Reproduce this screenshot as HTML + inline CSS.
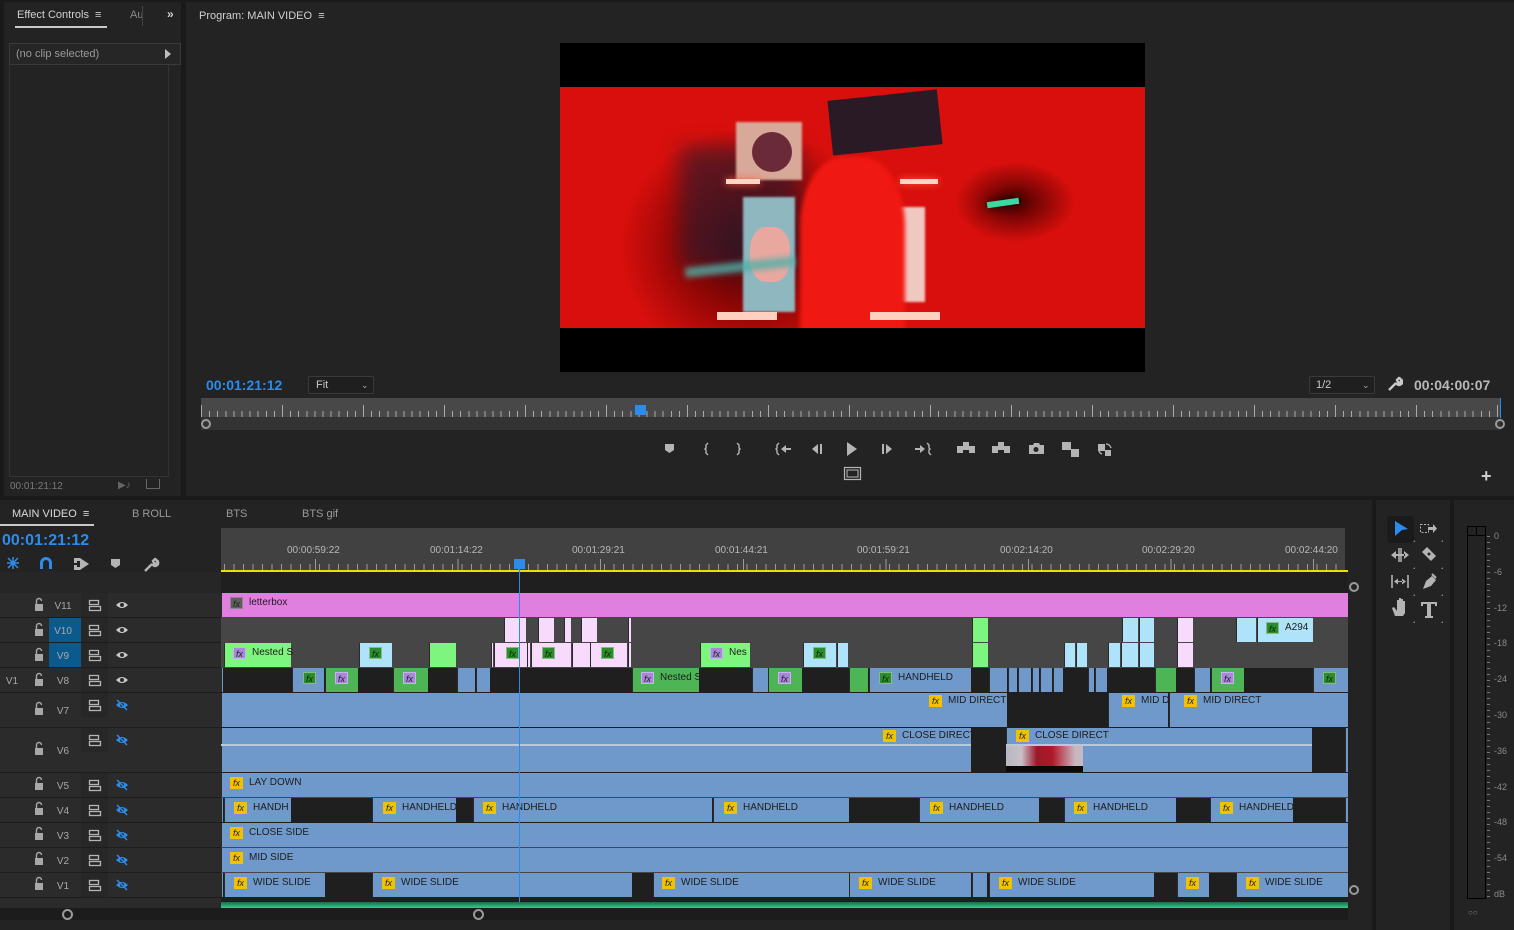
<!DOCTYPE html>
<html><head><meta charset="utf-8">
<style>
*{margin:0;padding:0;box-sizing:border-box}
body{width:1514px;height:930px;background:#1a1a1a;position:relative;overflow:hidden;font-family:"Liberation Sans",sans-serif;color:#b4b4b4}
.a{position:absolute}
.pan{position:absolute;background:#232323}
.t11{font-size:11px}
.row{position:absolute;left:221px;width:1127px;background:#464646}
.k{position:absolute;top:0;bottom:1px;box-shadow:inset 1px 0 0 #2a2a2a}
.B{background:#6f99cb}.K{background:#1f1f1f}.P{background:#f8dafc}.L{background:#aee3fa}.G{background:#7ef57e}.D{background:#4db556}.M{background:#e07fe0}
.lab{position:absolute;top:3px;height:14px;font-size:10px;color:#1c1c1c;white-space:nowrap;line-height:14px}
.fx{display:inline-block;width:13px;height:12px;font-size:9px;font-style:italic;line-height:12px;text-align:center;margin-right:6px;color:#222;vertical-align:top;margin-top:1px}
.y{background:#f2c200}.g{background:#2a8f2a;border:1px solid #8ab88a;color:#102010}.p{background:#a887dc;border:1px solid #c7b4ee}.gr{background:#5e5e5e;border:1px solid #888}
.hr{position:absolute;left:0;width:221px;background:#2b2b2b;border-bottom:1px solid #1d1d1d}
.hr .tg{position:absolute;left:81px;width:27px;top:0;bottom:0;background:#272727}
.rl{position:absolute;top:545px;font-size:10px;color:#b8b8b8}
.ic{position:absolute}
</style></head><body>

<!-- LEFT EFFECT CONTROLS -->
<div class="pan" style="left:4px;top:2px;width:177px;height:494px"></div>
<div class="a t11" style="left:17px;top:9px;color:#d0d0d0">Effect Controls &nbsp;≡</div>
<div class="a" style="left:15px;top:26px;width:92px;height:2px;background:#c8c8c8"></div>
<div class="a t11" style="left:130px;top:9px;color:#8a8a8a">Au</div>
<div class="a" style="left:142px;top:6px;width:1px;height:20px;background:#444"></div>
<div class="a" style="left:167px;top:7px;font-size:12px;color:#cfcfcf;font-weight:bold">»</div>
<div class="a" style="left:9px;top:43px;width:172px;height:22px;border:1px solid #3a3a3a;background:#262626"></div>
<div class="a t11" style="left:16px;top:48px;color:#9a9a9a">(no clip selected)</div>
<div class="a" style="left:165px;top:49px;width:0;height:0;border-left:6px solid #bdbdbd;border-top:5px solid transparent;border-bottom:5px solid transparent"></div>
<div class="a" style="left:9px;top:65px;width:160px;height:412px;border:1px solid #333;border-top:none;background:#232323"></div>
<div class="a" style="left:10px;top:481px;font-size:10px;color:#7a7a7a">00:01:21:12</div>
<div class="a" style="left:118px;top:480px;font-size:10px;color:#666">▶♪</div>
<div class="a" style="left:146px;top:479px;width:14px;height:10px;border:1px solid #666;border-top:none"></div>

<!-- PROGRAM MONITOR -->
<div class="pan" style="left:186px;top:2px;width:1328px;height:494px"></div>
<div class="a t11" style="left:199px;top:10px;color:#d0d0d0">Program: MAIN VIDEO &nbsp;≡</div>
<div class="a" style="left:560px;top:43px;width:585px;height:329px;background:#000"></div>
<div class="a" style="left:560px;top:87px;width:585px;height:241px;overflow:hidden;background:radial-gradient(ellipse 130px 120px at 190px 160px,#3a0810 0%,rgba(90,0,0,.6) 50%,rgba(0,0,0,0) 100%),radial-gradient(ellipse 60px 40px at 455px 115px,#400 0%,rgba(0,0,0,0) 100%),#d80f0c">
  <div class="a" style="left:120px;top:60px;width:120px;height:120px;background:#2b1c2e;filter:blur(10px);opacity:.6"></div>
  <div class="a" style="left:176px;top:35px;width:66px;height:58px;background:#d8a898;filter:blur(1px)"></div>
  <div class="a" style="left:192px;top:45px;width:40px;height:40px;background:#6a2a3a;border-radius:50%"></div>
  <div class="a" style="left:183px;top:110px;width:52px;height:115px;background:#8fb7c0;filter:blur(1px)"></div>
  <div class="a" style="left:190px;top:140px;width:40px;height:55px;background:#e8a8a0;border-radius:40%"></div>
  <div class="a" style="left:270px;top:8px;width:110px;height:55px;background:#2a1a26;transform:rotate(-6deg)"></div>
  <div class="a" style="left:320px;top:120px;width:45px;height:95px;background:#f0c8c2;filter:blur(1px)"></div>
  <div class="a" style="left:240px;top:70px;width:105px;height:175px;background:#f01812;border-radius:40% 40% 0 0;filter:blur(2px)"></div>
  <div class="a" style="left:166px;top:92px;width:34px;height:5px;background:#ffd5c5;box-shadow:0 0 8px #ff6040"></div>
  <div class="a" style="left:340px;top:92px;width:38px;height:5px;background:#ffd5c5;box-shadow:0 0 8px #ff6040"></div>
  <div class="a" style="left:157px;top:225px;width:60px;height:8px;background:#ffd0c0"></div>
  <div class="a" style="left:310px;top:225px;width:70px;height:8px;background:#ffd0c0"></div>
  <div class="a" style="left:125px;top:175px;width:110px;height:10px;background:#4fb0a8;filter:blur(3px);transform:rotate(-6deg);opacity:.8"></div>
  <div class="a" style="left:427px;top:113px;width:32px;height:6px;background:#3bd9a0;transform:rotate(-8deg);box-shadow:0 0 10px #000"></div>
</div>
<div class="a" style="left:206px;top:377px;font-size:14px;font-weight:bold;color:#2d8ceb">00:01:21:12</div>
<div class="a" style="left:308px;top:376px;width:66px;height:18px;border:1px solid #3a3a3a;border-radius:2px;background:#1f1f1f"></div>
<div class="a t11" style="left:316px;top:379px;color:#c8c8c8">Fit</div>
<div class="a" style="left:361px;top:380px;font-size:9px;color:#aaa">⌄</div>
<div class="a" style="left:1309px;top:376px;width:66px;height:18px;border:1px solid #3a3a3a;border-radius:2px;background:#1f1f1f"></div>
<div class="a t11" style="left:1316px;top:379px;color:#c8c8c8">1/2</div>
<div class="a" style="left:1362px;top:380px;font-size:9px;color:#aaa">⌄</div>
<svg class="ic" style="left:1387px;top:376px" width="16" height="16" viewBox="0 0 16 16"><path d="M2 14l7-7M9 7a3 3 0 1 0 3-5l-2 2 1 2 2 1 2-2a3 3 0 0 1-5 3" stroke="#c8c8c8" stroke-width="2.4" fill="none"/></svg>
<div class="a" style="left:1414px;top:377px;font-size:14px;font-weight:bold;color:#b8b8b8">00:04:00:07</div>
<div class="a" style="left:201px;top:398px;width:1300px;height:20px;background:#484848"></div>
<div class="a" style="left:201px;top:411px;width:1300px;height:6px;background:repeating-linear-gradient(90deg,#aaa 0 1px,transparent 1px 8.1px)"></div>
<div class="a" style="left:201px;top:405px;width:1300px;height:12px;background:repeating-linear-gradient(90deg,#aaa 0 1px,transparent 1px 81px)"></div>
<div class="a" style="left:201px;top:417px;width:1300px;height:13px;background:#333"></div>
<div class="a" style="left:635px;top:405px;width:11px;height:10px;background:#2d8ceb"></div>
<div class="a" style="left:1500px;top:398px;width:1px;height:20px;background:#2d8ceb"></div>
<div class="a" style="left:201px;top:419px;width:10px;height:10px;border:2px solid #9a9a9a;border-radius:50%"></div>
<div class="a" style="left:1495px;top:419px;width:10px;height:10px;border:2px solid #9a9a9a;border-radius:50%"></div>
<!-- transport -->
<svg class="ic" style="left:660px;top:440px" width="460" height="44" viewBox="0 0 460 44" fill="#b4b4b4" stroke="#b4b4b4">
 <path d="M5 4h9v6l-4.5 3L5 10z" stroke="none"/>
 <path d="M48 3l-2 2v3l-1 1 1 1v3l2 2" fill="none" stroke-width="1.4"/>
 <path d="M77 3l2 2v3l1 1-1 1v3l-2 2" fill="none" stroke-width="1.4"/>
 <path d="M119 3l-2 2v3l-1 1 1 1v3l2 2" fill="none" stroke-width="1.4"/><path d="M121 9l5-4v3h5v2h-5v3z" stroke="none"/>
 <path d="M152 9l6-5v10z M160 4h2v10h-2z" stroke="none"/>
 <path d="M187 2l10 7-10 7z" stroke="none"/>
 <path d="M222 4h2v10h-2z M226 4l6 5-6 5z" stroke="none"/>
 <path d="M255 8h5V5l5 4-5 4v-3h-5z" stroke="none"/><path d="M267 3l2 2v3l1 1-1 1v3l2 2" fill="none" stroke-width="1.4"/>
 <path d="M297 6h6v-4h6v4h6v7h-6v-3h-6v3h-6z" stroke="none"/>
 <path d="M332 6h6v-4h6v4h6v7h-6v-3h-6v3h-6z" stroke="none"/>
 <path d="M369 5h4l1-2h5l1 2h4v9h-15z" stroke="none"/><circle cx="376" cy="9.5" r="2.5" fill="#232323" stroke="none"/>
 <path d="M402 2h9v8h-9z M411 9h8v8h-8z" stroke="none"/>
 <path d="M438 4h7v7h-7z M445 10h6v6h-6z" stroke="none"/><path d="M446 4a5 5 0 0 1 5 4M442 14a5 5 0 0 1-3-3" fill="none" stroke-width="1.3"/>
 <rect x="184.5" y="27.5" width="16" height="12" fill="none" stroke-width="1.2"/><rect x="187" y="30" width="11" height="7" fill="none" stroke-width="1"/>
</svg>
<div class="a" style="left:1481px;top:466px;font-size:18px;font-weight:bold;color:#cfcfcf">+</div>

<!-- TIMELINE PANEL -->
<div class="pan" style="left:0;top:500px;width:1372px;height:430px"></div>
<div class="a t11" style="left:12px;top:508px;color:#dcdcdc">MAIN VIDEO &nbsp;≡</div>
<div class="a" style="left:0;top:524px;width:94px;height:2px;background:#c8c8c8"></div>
<div class="a t11" style="left:132px;top:508px;color:#9a9a9a">B ROLL</div>
<div class="a t11" style="left:226px;top:508px;color:#9a9a9a">BTS</div>
<div class="a t11" style="left:302px;top:508px;color:#9a9a9a">BTS gif</div>
<div class="a" style="left:2px;top:532px;font-size:16px;font-weight:bold;color:#2d8ceb">00:01:21:12</div>
<svg class="ic" style="left:4px;top:555px" width="160" height="18" viewBox="0 0 160 18">
 <g stroke="#2d8ceb" stroke-width="1.5" fill="none"><path d="M9 2v12M3 8h12M4 3l10 10M14 3L4 13"/></g>
 <path d="M36 14V8a6 6 0 0 1 12 0v6h-3V8a3 3 0 0 0-6 0v6z" fill="#2d8ceb"/>
 <path d="M70 3h6v3h-3v2h-3zM70 10h3v2h3v3h-6zM76 3l9 6-9 6z" fill="#b4b4b4"/>
 <path d="M107 4h9v6l-4.5 3-4.5-3z" fill="#b4b4b4"/>
 <path d="M141 16l7-7M148 9a3 3 0 1 0 3-5l-2 2 1 2 2 1 2-2a3 3 0 0 1-5 3" stroke="#b4b4b4" stroke-width="2.4" fill="none"/>
</svg>

<!-- ruler -->
<div class="a" style="left:221px;top:528px;width:1124px;height:43px;background:#414141"></div>
<div class="a" style="left:224px;top:564px;width:1121px;height:6px;background:repeating-linear-gradient(90deg,#9a9a9a 0 1px,transparent 1px 9.5px)"></div>
<div class="a" style="left:315px;top:559px;width:1030px;height:11px;background:repeating-linear-gradient(90deg,#9a9a9a 0 1px,transparent 1px 142.6px)"></div>
<div class="a" style="left:221px;top:570px;width:1127px;height:2px;background:#e8e000"></div>
<div class="a" style="left:221px;top:572px;width:1127px;height:21px;background:#1f1f1f"></div>
<div class="rl" style="left:287px">00:00:59:22</div>
<div class="rl" style="left:430px">00:01:14:22</div>
<div class="rl" style="left:572px">00:01:29:21</div>
<div class="rl" style="left:715px">00:01:44:21</div>
<div class="rl" style="left:857px">00:01:59:21</div>
<div class="rl" style="left:1000px">00:02:14:20</div>
<div class="rl" style="left:1142px">00:02:29:20</div>
<div class="rl" style="left:1285px">00:02:44:20</div>

<!-- track headers -->
<div class="a" style="left:0;top:572px;width:221px;height:21px;background:#262626"></div>
<div class="hr" style="top:593px;height:25px"><div class="tg"></div></div>
<div class="hr" style="top:618px;height:25px"><div class="tg"></div><div class="a" style="left:49px;top:0;width:32px;height:24px;background:#0b5a8d"></div></div>
<div class="hr" style="top:643px;height:25px"><div class="tg"></div><div class="a" style="left:49px;top:0;width:32px;height:24px;background:#0b5a8d"></div></div>
<div class="hr" style="top:668px;height:25px"><div class="tg"></div></div>
<div class="hr" style="top:693px;height:35px"><div class="tg" style="bottom:10px"></div></div>
<div class="hr" style="top:728px;height:45px"><div class="tg" style="bottom:20px"></div></div>
<div class="hr" style="top:773px;height:25px"><div class="tg"></div></div>
<div class="hr" style="top:798px;height:25px"><div class="tg"></div></div>
<div class="hr" style="top:823px;height:25px"><div class="tg"></div></div>
<div class="hr" style="top:848px;height:25px"><div class="tg"></div></div>
<div class="hr" style="top:873px;height:25px"><div class="tg"></div></div>
<div class="a" style="left:0;top:898px;width:221px;height:10px;background:#2b2b2b"></div>

<svg class="ic" style="left:0;top:593px" width="221" height="305" viewBox="0 0 221 305">
 <defs>
  <g id="lk"><path d="M-3 2h8v7h-8z" fill="#a8a8a8"/><path d="M-1.5 2v-3a2.5 2.5 0 0 1 5 0" stroke="#a8a8a8" stroke-width="1.4" fill="none"/></g>
  <g id="tg" fill="none" stroke="#b4b4b4" stroke-width="1.3"><rect x="-5.5" y="-4.5" width="9" height="4"/><rect x="-5.5" y="1.5" width="11" height="4"/></g>
  <g id="ey"><path d="M-6 0q6-6 12 0q-6 6-12 0z" fill="#c8c8c8"/><circle r="2" fill="#2b2b2b"/></g>
  <g id="ex"><path d="M-6 0q6-6 12 0q-6 6-12 0z" fill="#2d8ceb"/><circle r="2" fill="#2b2b2b"/><path d="M-5-5l10 10" stroke="#2d8ceb" stroke-width="1.5"/></g>
 </defs>
 <g font-family="Liberation Sans" font-size="10" fill="#a8a8a8" text-anchor="middle">
  <use href="#lk" x="38" y="9"/><text x="63" y="16">V11</text><use href="#tg" x="95" y="12"/><use href="#ey" x="122" y="12"/>
  <use href="#lk" x="38" y="34"/><text x="63" y="41">V10</text><use href="#tg" x="95" y="37"/><use href="#ey" x="122" y="37"/>
  <use href="#lk" x="38" y="59"/><text x="63" y="66">V9</text><use href="#tg" x="95" y="62"/><use href="#ey" x="122" y="62"/>
  <text x="12" y="91">V1</text><use href="#lk" x="38" y="84"/><text x="63" y="91">V8</text><use href="#tg" x="95" y="87"/><use href="#ey" x="122" y="87"/>
  <use href="#lk" x="38" y="113"/><text x="63" y="121">V7</text><use href="#tg" x="95" y="112"/><use href="#ex" x="122" y="112"/>
  <use href="#lk" x="38" y="153"/><text x="63" y="161">V6</text><use href="#tg" x="95" y="147"/><use href="#ex" x="122" y="147"/>
  <use href="#lk" x="38" y="188"/><text x="63" y="196">V5</text><use href="#tg" x="95" y="192"/><use href="#ex" x="122" y="192"/>
  <use href="#lk" x="38" y="213"/><text x="63" y="221">V4</text><use href="#tg" x="95" y="217"/><use href="#ex" x="122" y="217"/>
  <use href="#lk" x="38" y="238"/><text x="63" y="246">V3</text><use href="#tg" x="95" y="242"/><use href="#ex" x="122" y="242"/>
  <use href="#lk" x="38" y="263"/><text x="63" y="271">V2</text><use href="#tg" x="95" y="267"/><use href="#ex" x="122" y="267"/>
  <use href="#lk" x="38" y="288"/><text x="63" y="296">V1</text><use href="#tg" x="95" y="292"/><use href="#ex" x="122" y="292"/>
 </g>
</svg>

<!-- V11 -->
<div class="row" style="top:593px;height:25px"><div class="k M" style="left:0;width:1127px"></div><div class="lab" style="left:9px"><i class="fx gr">fx</i>letterbox</div></div>
<!-- V10 -->
<div class="row" style="top:618px;height:25px">
 <div class="k P" style="left:283px;width:22px"></div><div class="k P" style="left:317px;width:16px"></div><div class="k P" style="left:343px;width:7px"></div><div class="k P" style="left:360px;width:16px"></div><div class="k P" style="left:407px;width:3px"></div>
 <div class="k G" style="left:751px;width:16px"></div>
 <div class="k L" style="left:901px;width:16px"></div><div class="k L" style="left:918px;width:15px"></div>
 <div class="k P" style="left:956px;width:16px"></div>
 <div class="k L" style="left:1015px;width:20px"></div><div class="k L" style="left:1036px;width:56px"></div>
 <div class="lab" style="left:1045px"><i class="fx g">fx</i>A294</div>
</div>
<!-- V9 -->
<div class="row" style="top:643px;height:25px">
 <div class="k G" style="left:3px;width:67px"></div><div class="lab" style="left:12px"><i class="fx p">fx</i>Nested S</div>
 <div class="k L" style="left:138px;width:33px"></div><div class="lab" style="left:148px"><i class="fx g">fx</i></div>
 <div class="k G" style="left:208px;width:27px"></div>
 <div class="k P" style="left:270px;width:2px"></div><div class="k P" style="left:273px;width:33px"></div><div class="k P" style="left:306px;width:3px"></div><div class="k P" style="left:310px;width:40px"></div><div class="k P" style="left:351px;width:18px"></div><div class="k P" style="left:369px;width:37px"></div><div class="k P" style="left:407px;width:3px"></div>
 <div class="lab" style="left:285px"><i class="fx g">fx</i></div><div class="lab" style="left:321px"><i class="fx g">fx</i></div><div class="lab" style="left:380px"><i class="fx g">fx</i></div>
 <div class="k G" style="left:479px;width:50px"></div><div class="lab" style="left:489px"><i class="fx p">fx</i>Nes</div>
 <div class="k L" style="left:582px;width:33px"></div><div class="k L" style="left:616px;width:11px"></div><div class="lab" style="left:592px"><i class="fx g">fx</i></div>
 <div class="k G" style="left:751px;width:16px"></div>
 <div class="k L" style="left:843px;width:11px"></div><div class="k L" style="left:855px;width:11px"></div>
 <div class="k L" style="left:887px;width:12px"></div><div class="k L" style="left:900px;width:17px"></div><div class="k L" style="left:918px;width:15px"></div>
 <div class="k P" style="left:956px;width:16px"></div>
</div>
<!-- V8 -->
<div class="row" style="top:668px;height:25px;background:#1f1f1f">
 <div class="k B" style="left:0;width:2px"></div>
 <div class="k B" style="left:71px;width:32px"></div><div class="lab" style="left:82px"><i class="fx g">fx</i></div>
 <div class="k D" style="left:104px;width:33px"></div><div class="lab" style="left:114px"><i class="fx p">fx</i></div>
 <div class="k D" style="left:172px;width:35px"></div><div class="lab" style="left:182px"><i class="fx p">fx</i></div>
 <div class="k B" style="left:236px;width:18px"></div><div class="k B" style="left:255px;width:14px"></div>
 <div class="k D" style="left:411px;width:67px"></div><div class="lab" style="left:420px"><i class="fx p">fx</i>Nested S</div>
 <div class="k B" style="left:531px;width:16px"></div>
 <div class="k D" style="left:547px;width:34px"></div><div class="lab" style="left:557px"><i class="fx p">fx</i></div>
 <div class="k D" style="left:628px;width:19px"></div>
 <div class="k B" style="left:648px;width:102px"></div><div class="lab" style="left:658px"><i class="fx g">fx</i>HANDHELD</div>
 <div class="k B" style="left:768px;width:18px"></div><div class="k B" style="left:787px;width:9px"></div><div class="k B" style="left:797px;width:13px"></div><div class="k B" style="left:811px;width:7px"></div><div class="k B" style="left:819px;width:12px"></div><div class="k B" style="left:832px;width:10px"></div>
 <div class="k B" style="left:867px;width:6px"></div><div class="k B" style="left:874px;width:12px"></div>
 <div class="k D" style="left:934px;width:21px"></div>
 <div class="k B" style="left:973px;width:16px"></div>
 <div class="k D" style="left:990px;width:33px"></div><div class="lab" style="left:1000px"><i class="fx p">fx</i></div>
 <div class="k B" style="left:1092px;width:35px"></div><div class="lab" style="left:1102px"><i class="fx g">fx</i></div>
</div>
<!-- V7 -->
<div class="row" style="top:693px;height:35px;background:#1f1f1f">
 <div class="k B" style="left:0;width:786px"></div><div class="lab" style="left:708px;top:1px"><i class="fx y">fx</i>MID DIRECT</div>
 <div class="k B" style="left:887px;width:60px"></div><div class="lab" style="left:901px;top:1px"><i class="fx y">fx</i>MID DI</div>
 <div class="k B" style="left:948px;width:179px"></div><div class="lab" style="left:963px;top:1px"><i class="fx y">fx</i>MID DIRECT</div>
</div>
<!-- V6 -->
<div class="row" style="top:728px;height:45px;background:#1f1f1f">
 <div class="k B" style="left:0;width:750px"></div><div class="lab" style="left:662px;top:1px"><i class="fx y">fx</i>CLOSE DIRECT</div>
 <div class="k B" style="left:785px;width:306px"></div>
 <div class="a" style="left:785px;top:18px;width:77px;height:26px;background:linear-gradient(90deg,#b8b8c0 0%,#c8c0c8 20%,#9a1a2a 40%,#b01828 60%,#c8b8c0 90%)"></div>
 <div class="a" style="left:785px;top:38px;width:77px;height:6px;background:#0a0a0a"></div>
 <div class="lab" style="left:795px;top:1px"><i class="fx y">fx</i>CLOSE DIRECT</div>
 <div class="k B" style="left:1124px;width:3px"></div>
 <div class="a" style="left:0;top:16px;width:750px;height:2px;background:#b9c9dc"></div>
 <div class="a" style="left:785px;top:16px;width:306px;height:2px;background:#b9c9dc"></div>
</div>
<!-- V5 -->
<div class="row" style="top:773px;height:25px"><div class="k B" style="left:0;width:1127px"></div><div class="lab" style="left:9px"><i class="fx y">fx</i>LAY DOWN</div></div>
<!-- V4 -->
<div class="row" style="top:798px;height:25px;background:#1f1f1f">
 <div class="k B" style="left:0;width:2px"></div>
 <div class="k B" style="left:3px;width:67px"></div><div class="lab" style="left:13px"><i class="fx y">fx</i>HANDH</div>
 <div class="k B" style="left:151px;width:84px"></div><div class="lab" style="left:162px"><i class="fx y">fx</i>HANDHELD</div>
 <div class="k B" style="left:252px;width:239px"></div><div class="lab" style="left:262px"><i class="fx y">fx</i>HANDHELD</div>
 <div class="k B" style="left:492px;width:136px"></div><div class="lab" style="left:503px"><i class="fx y">fx</i>HANDHELD</div>
 <div class="k B" style="left:698px;width:120px"></div><div class="lab" style="left:709px"><i class="fx y">fx</i>HANDHELD</div>
 <div class="k B" style="left:843px;width:112px"></div><div class="lab" style="left:853px"><i class="fx y">fx</i>HANDHELD</div>
 <div class="k B" style="left:989px;width:83px"></div><div class="lab" style="left:999px"><i class="fx y">fx</i>HANDHELD</div>
 <div class="k B" style="left:1124px;width:3px"></div>
</div>
<!-- V3 -->
<div class="row" style="top:823px;height:25px"><div class="k B" style="left:0;width:1127px"></div><div class="lab" style="left:9px"><i class="fx y">fx</i>CLOSE SIDE</div></div>
<!-- V2 -->
<div class="row" style="top:848px;height:25px"><div class="k B" style="left:0;width:1127px"></div><div class="lab" style="left:9px"><i class="fx y">fx</i>MID SIDE</div></div>
<!-- V1 -->
<div class="row" style="top:873px;height:25px;background:#1f1f1f">
 <div class="k B" style="left:0;width:2px"></div>
 <div class="k B" style="left:3px;width:101px"></div><div class="lab" style="left:13px"><i class="fx y">fx</i>WIDE SLIDE</div>
 <div class="k B" style="left:151px;width:260px"></div><div class="lab" style="left:161px"><i class="fx y">fx</i>WIDE SLIDE</div>
 <div class="k B" style="left:432px;width:196px"></div><div class="lab" style="left:441px"><i class="fx y">fx</i>WIDE SLIDE</div>
 <div class="k B" style="left:628px;width:122px"></div><div class="lab" style="left:638px"><i class="fx y">fx</i>WIDE SLIDE</div>
 <div class="k B" style="left:751px;width:15px"></div>
 <div class="k B" style="left:768px;width:165px"></div><div class="lab" style="left:778px"><i class="fx y">fx</i>WIDE SLIDE</div>
 <div class="k B" style="left:956px;width:32px"></div><div class="lab" style="left:965px"><i class="fx y">fx</i></div>
 <div class="k B" style="left:1015px;width:112px"></div><div class="lab" style="left:1025px"><i class="fx y">fx</i>WIDE SLIDE</div>
</div>
<!-- audio strip -->
<div class="a" style="left:221px;top:898px;width:1127px;height:4px;background:#1f1f1f"></div>
<div class="a" style="left:221px;top:902px;width:1127px;height:6px;background:linear-gradient(#1c6a4a,#2fcf8f);"></div>
<!-- playhead -->
<div class="a" style="left:519px;top:560px;width:1px;height:342px;background:#2d8ceb"></div>
<div class="a" style="left:514px;top:559px;width:11px;height:10px;background:#2d8ceb"></div>
<!-- scrollbars -->
<div class="a" style="left:0;top:908px;width:1348px;height:12px;background:#1c1c1c"></div>
<div class="a" style="left:62px;top:909px;width:11px;height:11px;border:2px solid #9a9a9a;border-radius:50%"></div>
<div class="a" style="left:473px;top:909px;width:11px;height:11px;border:2px solid #9a9a9a;border-radius:50%"></div>
<div class="a" style="left:1349px;top:582px;width:10px;height:10px;border:2px solid #9a9a9a;border-radius:50%"></div>
<div class="a" style="left:1349px;top:885px;width:10px;height:10px;border:2px solid #9a9a9a;border-radius:50%"></div>

<!-- TOOLS -->
<div class="pan" style="left:1376px;top:500px;width:74px;height:430px"></div>
<div class="a" style="left:1387px;top:516px;width:27px;height:27px;background:#1b1b1b;border-radius:3px"></div>
<svg class="ic" style="left:1386px;top:516px" width="60" height="110" viewBox="0 0 60 110" fill="#b4b4b4">
 <path d="M9 5l13 8-6 1-7 6z" fill="#2d8ceb"/>
 <rect x="34.5" y="8.5" width="8" height="8" fill="none" stroke="#b4b4b4" stroke-dasharray="2 1.5"/><path d="M42 11h5v-3l4 4.5-4 4.5v-3h-5z"/>
 <path d="M13 32v14M15 32v14" stroke="#b4b4b4" stroke-width="1.5"/><path d="M5 39l5-4v8z M23 39l-5-4v8z M9 38h10v2H9z"/>
 <path d="M36 36l5-5 9 9-5 5z"/><circle cx="43" cy="38" r="1.5" fill="#232323"/>
 <path d="M6 59v13M22 59v13" stroke="#b4b4b4" stroke-width="1.6"/><path d="M8 65.5l4-3v6zM20 65.5l-4-3v6zM11 65h6v1h-6z"/>
 <path d="M37 73l3-8 6-5 4 4-5 6z"/><path d="M46 58l4 4" stroke="#b4b4b4" stroke-width="2"/>
 <path d="M9 100l-3-8 2-1 3 4V84h2v8-10h2v10-9h2v9-7h2v12l-2 3z"/>
 <path d="M35 86h16v4h-2v-2h-4v12h2v2h-8v-2h2V88h-4v2h-2z"/>
 <path d="M27 26h2v-2zM55 26h2v-2zM27 53h2v-2zM55 53h2v-2zM27 80h2v-2zM55 80h2v-2zM27 107h2v-2zM55 107h2v-2z" fill="#888"/>
</svg>

<!-- METER -->
<div class="pan" style="left:1454px;top:500px;width:60px;height:430px"></div>
<div class="a" style="left:1467px;top:526px;width:19px;height:373px;border:1px solid #000;background:#232323"></div>
<div class="a" style="left:1467px;top:526px;width:19px;height:10px;border:1px solid #000"></div>
<div class="a" style="left:1476px;top:526px;width:1px;height:10px;background:#000"></div>
<div class="a" style="left:1487px;top:536px;width:3px;height:362px;background:repeating-linear-gradient(#777 0 1px,transparent 1px 6px)"></div>
<div class="a" style="left:1494px;top:519px;font-size:9px;color:#8a8a8a;line-height:35.8px">0<br>-6<br>-12<br>-18<br>-24<br>-30<br>-36<br>-42<br>-48<br>-54<br>dB</div>
<div class="a" style="left:1468px;top:908px;font-size:8px;color:#888">○○</div>
</body></html>
